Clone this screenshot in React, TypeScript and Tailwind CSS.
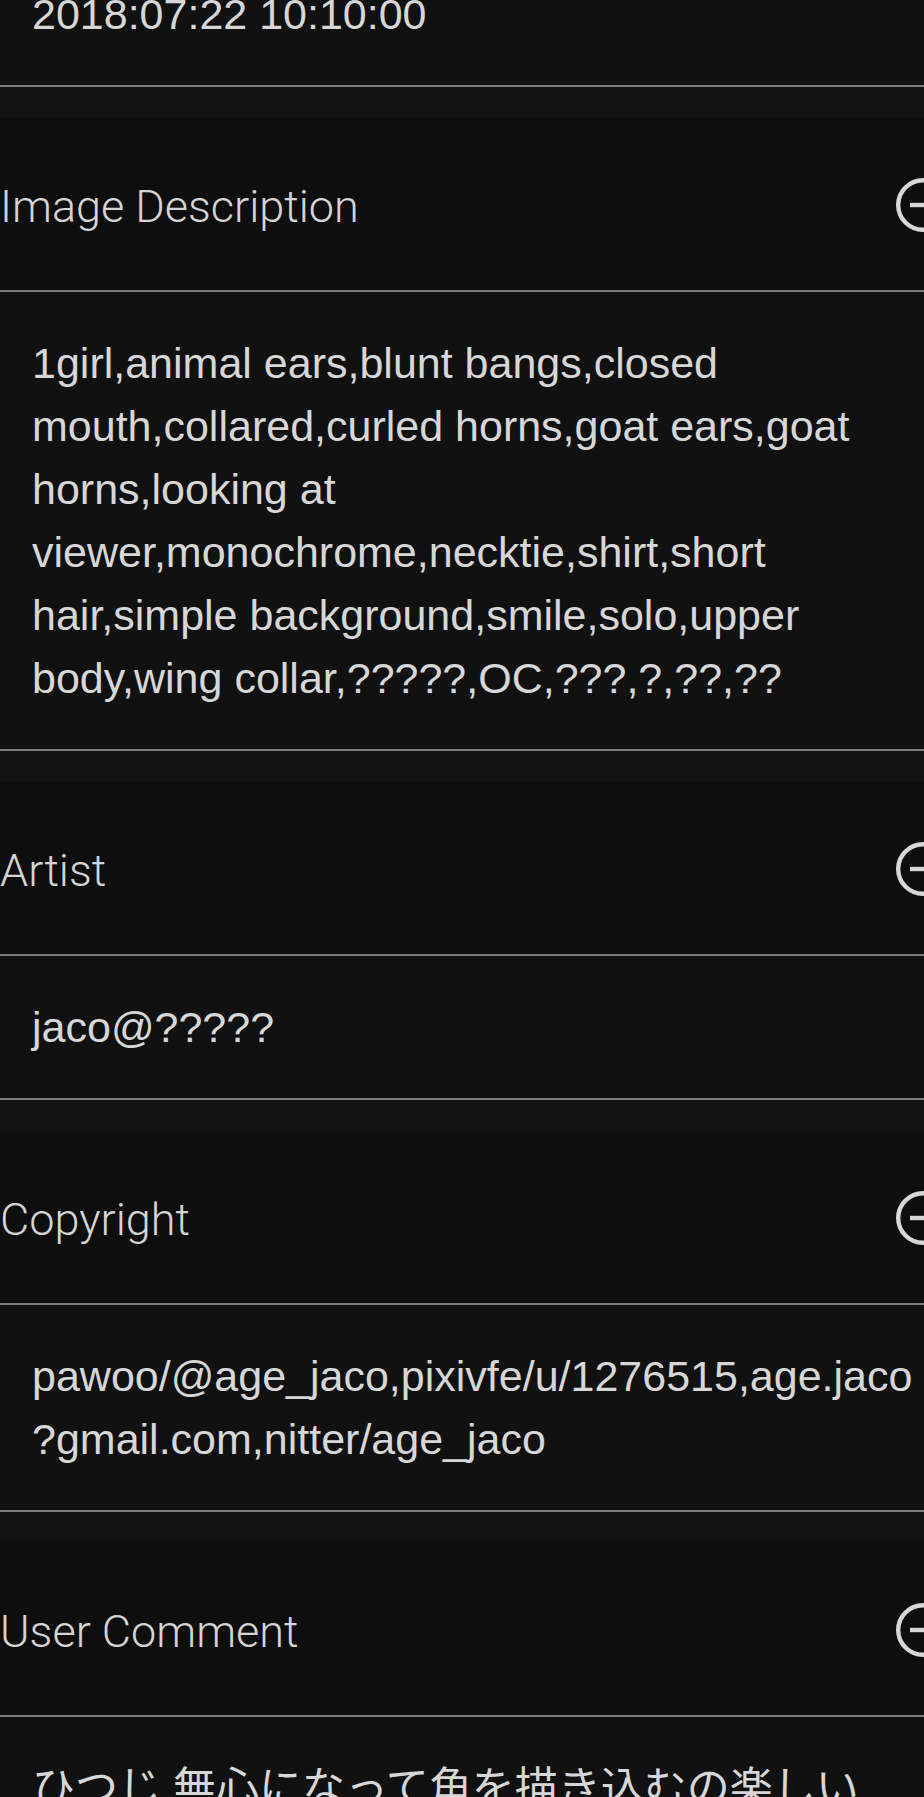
import React from 'react'

const FONT = { fontFamily: '"Liberation Sans", "Noto Sans CJK JP", sans-serif' }
const LABEL_FONT = { fontFamily: 'Roboto, "Liberation Sans", sans-serif' }

interface Field {
  label: string
  value: string
}

const FIELDS: Field[] = [
  {
    label: 'Image Description',
    value:
      '1girl,animal ears,blunt bangs,closed mouth,collared,curled horns,goat ears,goat horns,looking at viewer,monochrome,necktie,shirt,short hair,simple background,smile,solo,upper body,wing collar,?????,OC,???,?,??,??',
  },
  { label: 'Artist', value: 'jaco@?????' },
  { label: 'Copyright', value: 'pawoo/@age_jaco,pixivfe/u/1276515,age.jaco?gmail.com,nitter/age_jaco' },
  { label: 'User Comment', value: 'ひつじ 無心になって角を描き込むの楽しい' },
]

function CollapseIcon() {
  return (
    <svg width="54" height="54" viewBox="0 0 54 54" fill="none" className="shrink-0">
      <circle cx="27" cy="27" r="24.8" stroke="#d7d7d7" strokeWidth="4.4" />
      <line x1="14" y1="27" x2="40" y2="27" stroke="#d7d7d7" strokeWidth="4.4" />
    </svg>
  )
}

function Value({ text }: { text: string }) {
  return (
    <>
      <div className="pl-[32px] pr-[36px] pt-[40px] pb-[39px] bg-[#111111]">
        <p className="text-[43px] leading-[63px] text-[#d7d7d7] break-words">{text}</p>
      </div>
      <div className="h-[2px] bg-[#7b7b7b]" />
    </>
  )
}

function Section({ field }: { field: Field }) {
  return (
    <div>
      {/* spacer band above each header */}
      <div className="h-[31px] bg-[#121212]" />
      <div className="h-[172px] flex items-center justify-between pr-[10px] bg-[#0e0e0e]">
        <span className="text-[45px] font-light pt-[6px] text-[#d4d4d4]" style={LABEL_FONT}>
          {field.label}
        </span>
        <div className="pt-[2px]">
          <CollapseIcon />
        </div>
      </div>
      <div className="h-[2px] bg-[#7b7b7b]" />
      <Value text={field.value} />
    </div>
  )
}

export default function App() {
  return (
    <div className="w-[924px] min-h-screen overflow-hidden bg-[#101010]" style={FONT}>
      <div className="w-[960px] -mt-[57px]">
        <Value text="2018:07:22 10:10:00" />
        {FIELDS.map(f => (
          <Section key={f.label} field={f} />
        ))}
      </div>
    </div>
  )
}
